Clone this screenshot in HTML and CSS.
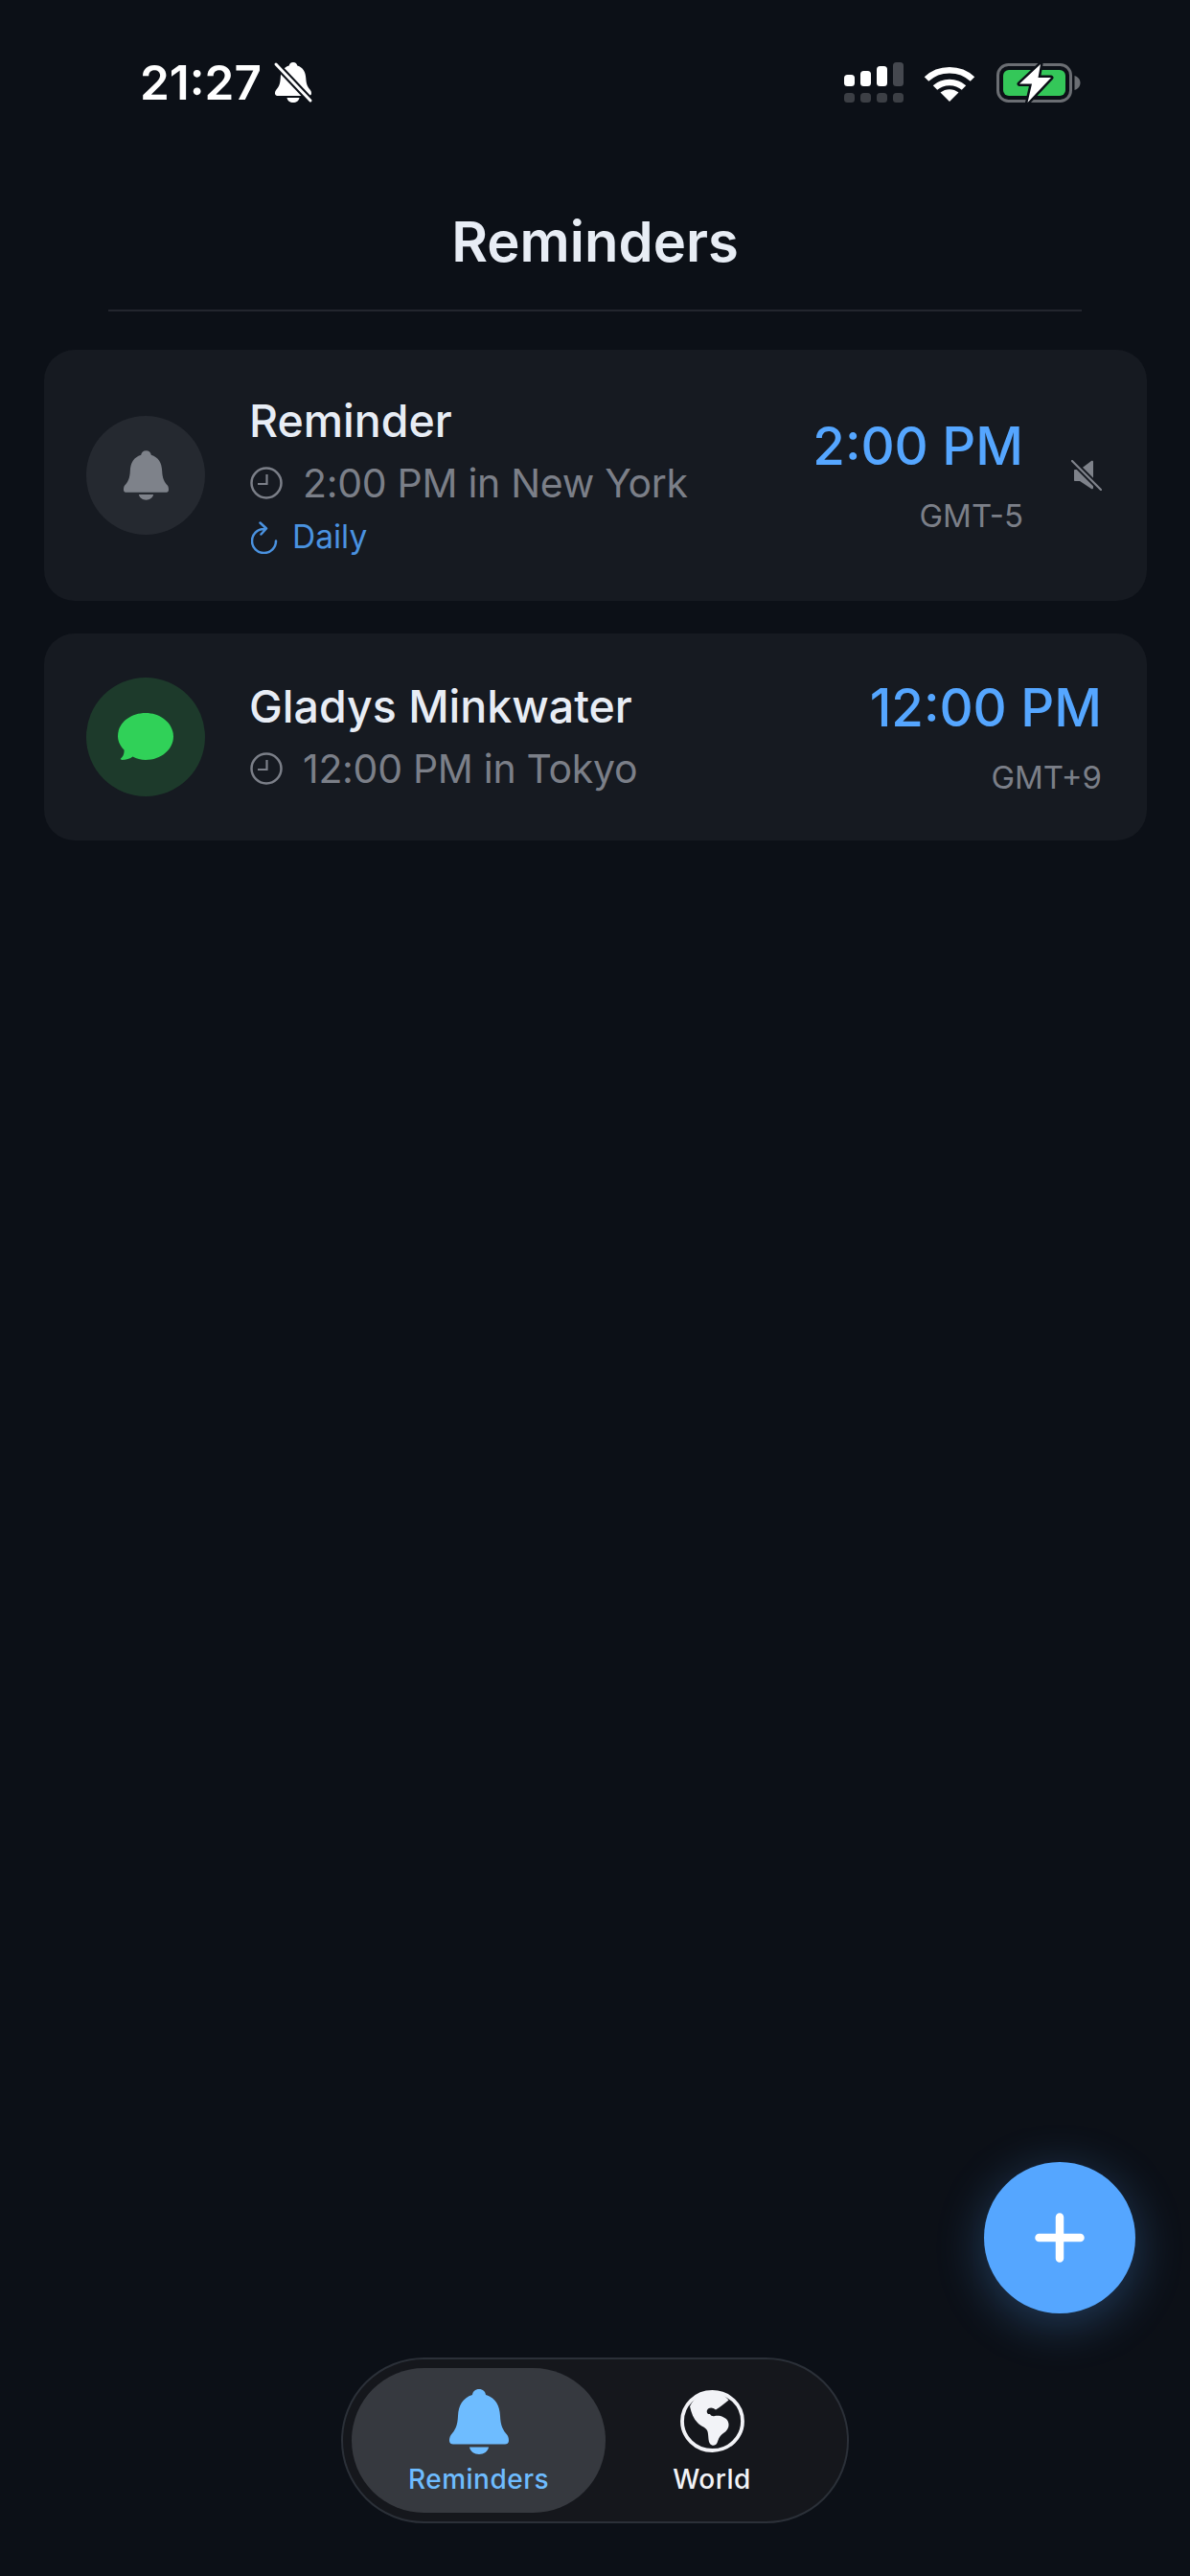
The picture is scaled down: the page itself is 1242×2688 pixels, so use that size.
FILE: index.html
```html
<!DOCTYPE html>
<html lang="en">
  <head>
    <meta charset="UTF-8" />
    <meta name="viewport" content="width=device-width, initial-scale=1.0" />
    <title>Reminders</title>
    <link rel="stylesheet" href="styles.css">
  </head>
  <body>
    <div class="page">
      <div class="status-bar">
        <div class="status-left">
          <span class="status-time">21:27</span>
          <svg class="icon-silent" viewBox="0 0 42 44">
            <g transform="translate(2 1)">
              <path fill="#fff" d="M19 0c-2.500 0-4 1.500-4.300 3.600C8.500 5.500 6 10.500 5.700 17c-.3 6-2 9-4.600 12C0 30.200 0 32 0 32.600 0 34.100 1.200 35 2.500 35h33c1.300 0 2.500-.9 2.500-2.400 0-.6 0-2.400-1.100-3.600-2.600-3-4.300-6-4.600-12-.3-6.500-2.800-11.500-9-13.400C23 1.500 21.500 0 19 0zM12.500 37h13c-.4 3-3.200 5-6.500 5s-6.100-2-6.500-5z" />
            </g>
            <path stroke="#0c1017" stroke-width="7" d="M3 3l36 38" />
            <path stroke="#fff" stroke-width="3" stroke-linecap="round" d="M3 3l36 38" />
          </svg>
        </div>
        <div class="status-right">
          <svg class="icon-signal" viewBox="0 0 62 42">
            <rect x="0" y="13" width="11" height="12" rx="3.500" fill="#fff" />
            <rect x="17" y="9" width="11" height="16" rx="3.500" fill="#fff" />
            <rect x="34" y="4" width="11" height="21" rx="3.500" fill="#fff" />
            <rect x="51" y="0" width="11" height="25" rx="3.500" fill="#45484f" />
            <rect x="0" y="32" width="11" height="10" rx="3.500" fill="#3c3f45" />
            <rect x="17" y="32" width="11" height="10" rx="3.500" fill="#3c3f45" />
            <rect x="34" y="32" width="11" height="10" rx="3.500" fill="#3c3f45" />
            <rect x="51" y="32" width="11" height="10" rx="3.500" fill="#3c3f45" />
          </svg>
          <svg class="icon-wifi" viewBox="0 0 54 39">
            <path fill="none" stroke="#fff" stroke-width="6.500" d="M3 15.500C16 3 38 3 51 15.500" />
            <path fill="none" stroke="#fff" stroke-width="6.500" d="M12 24.500C20 17 34 17 42 24.500" />
            <path fill="#fff" d="M27 39L17.500 29.500C23 25 31 25 36.500 29.500z" />
          </svg>
          <svg class="icon-battery" viewBox="0 -1 88 43">
            <rect x="1.500" y="1.500" width="76" height="38" rx="11" fill="none" stroke="#6b6e73" stroke-width="3" />
            <rect x="7" y="7" width="65" height="27" rx="6" fill="#34c759" />
            <path fill="#6b6e73" d="M81.500 13c3.500 1 6 4 6 7.500s-2.500 6.500-6 7.500z" />
            <path fill="#fff" stroke="#0c1017" stroke-width="5" stroke-linejoin="round" paint-order="stroke" d="M46 1L24 21.500H37L32.500 41L57 15H43.500z" />
          </svg>
        </div>
      </div>

      <header class="page-header">
        <h1>Reminders</h1>
      </header>

      <div class="card-list">
        <div class="card">
          <div class="avatar avatar-muted">
            <svg class="avatar-bell" viewBox="0 0 62 68"><path fill="currentColor" d="M31 0c-4 0-6.500 2.500-7 6C14 9 9.500 17 9 28c-.4 10-3 15-7.500 20C0 50 0 53 0 54c0 2.500 2 3.500 4 3.500h54c2 0 4-1 4-3.500 0-1 0-4-1.500-6C56 43 53.400 38 53 28 52.500 17 48 9 38 6c-.5-3.500-3-6-7-6zM21 60.500h20c-.6 4.500-5 7.500-10 7.500s-9.400-3-10-7.500z" /></svg>
          </div>
          <div class="card-body">
            <div class="card-title">Reminder</div>
            <div class="card-sub">
              <svg class="icon-clock" viewBox="0 0 34 34">
                <circle cx="17" cy="17" r="15.500" fill="none" stroke="currentColor" stroke-width="2.500" />
                <path fill="none" stroke="currentColor" stroke-width="2.200" d="M17.500 8v10H8" />
              </svg>
              <span>2:00 PM in New York</span>
            </div>
            <div class="card-repeat">
              <svg class="icon-repeat" viewBox="0 0 28 34">
                <path fill="none" stroke="currentColor" stroke-width="2.500" stroke-linecap="round" stroke-linejoin="round" d="M26 20.500A12.500 12.500 0 1 1 13.500 8M9.500 1.500L16 7.500 10.500 13.500" />
              </svg>
              <span>Daily</span>
            </div>
          </div>
          <div class="card-time">
            <div class="time-value">2:00 PM</div>
            <div class="time-zone">GMT-5</div>
          </div>
          <svg class="icon-mute" viewBox="0 0 32 32">
            <path fill="#7e828a" d="M3 11c0-.6.4-1 1-1h5L21 1c1-.7 2-.2 2 1v27c0 1.200-1 1.700-2 1L9 22H4c-.6 0-1-.4-1-1z" />
            <path stroke="#161a21" stroke-width="6" d="M1 1l30 30" />
            <path stroke="#7e828a" stroke-width="2.200" stroke-linecap="round" d="M1 1l30 30" />
          </svg>
        </div>

        <div class="card">
          <div class="avatar avatar-green">
            <svg class="avatar-bubble" viewBox="0 0 58 50"><path fill="currentColor" d="M29 0C13 0 0 10.500 0 24c0 5.500 2.500 10.500 6.500 14.500C7 42 5.500 46 3 47.500c-.5.800 0 1.500 1 1.500 4.500 0 9-1.500 11.500-3.500C19.500 47.500 24 49 29 49c16 0 29-11 29-24.500S45 0 29 0z" /></svg>
          </div>
          <div class="card-body">
            <div class="card-title">Gladys Minkwater</div>
            <div class="card-sub">
              <svg class="icon-clock" viewBox="0 0 34 34">
                <circle cx="17" cy="17" r="15.500" fill="none" stroke="currentColor" stroke-width="2.500" />
                <path fill="none" stroke="currentColor" stroke-width="2.200" d="M17.500 8v10H8" />
              </svg>
              <span>12:00 PM in Tokyo</span>
            </div>
          </div>
          <div class="card-time">
            <div class="time-value">12:00 PM</div>
            <div class="time-zone">GMT+9</div>
          </div>
        </div>
      </div>

      <nav class="tab-bar">
        <div class="tab-pill">
          <div class="tab tab-active">
            <svg class="tab-bell" viewBox="0 0 62 68"><path fill="currentColor" d="M31 0c-4 0-6.500 2.500-7 6C14 9 9.500 17 9 28c-.4 10-3 15-7.500 20C0 50 0 53 0 54c0 2.500 2 3.500 4 3.500h54c2 0 4-1 4-3.500 0-1 0-4-1.500-6C56 43 53.400 38 53 28 52.500 17 48 9 38 6c-.5-3.500-3-6-7-6zM21 60.500h20c-.6 4.500-5 7.500-10 7.500s-9.400-3-10-7.500z" /></svg>
            <span>Reminders</span>
          </div>
          <div class="tab">
            <svg class="tab-globe" viewBox="0 0 67 65">
              <ellipse cx="33.500" cy="32.500" rx="31.500" ry="30.500" fill="none" stroke="currentColor" stroke-width="3.800" />
              <path fill="currentColor" d="M10 17C15 6 25 2 33.500 2 40 2 46 5 50.500 10.500 46 14 41 18 37 20.500 34 18 30 17.500 28 21 27 24 29 25.500 31 25 32 27 34 27.500 36 27 41 26 47 28 49.500 32 52 37 50 42 45 45 41 47.500 40 51 38.500 55 37 58.500 33 58.500 31 56 28.500 53 30 46 28 42 26 38.500 21 37.500 18 34 14 30 11.500 24 10 17z" />
            </svg>
            <span>World</span>
          </div>
        </div>
      </nav>

      <button class="fab" type="button">
        <svg viewBox="0 0 52 52"><path stroke="#fff" stroke-width="8.500" stroke-linecap="round" d="M26 4.500v43M4.500 26h43" /></svg>
      </button>
    </div>
  </body>
</html>
```

FILE: styles.css
```css
body {
  margin: 0;
  padding: 0;
  font-family: Inter, "Noto Sans", sans-serif;
  background-color: #0c1017;
  color: #e8edf5;
}
.page {
  position: relative;
  height: 2688px;
  display: flex;
  flex-direction: column;
  overflow: hidden;
}

/* status bar */
.status-bar {
  display: flex;
  justify-content: space-between;
  align-items: center;
  height: 56px;
  padding: 58px 114px 0 146px;
}
.status-left {
  display: flex;
  align-items: center;
  gap: 12px;
}
.status-time {
  font-size: 49.5px;
  font-weight: 600;
  line-height: 56px;
  color: #ffffff;
}
.icon-silent {
  width: 42px;
  height: 44px;
}
.status-right {
  display: flex;
  align-items: center;
}
.icon-signal {
  width: 62px;
  height: 42px;
  margin-right: 21px;
}
.icon-wifi {
  width: 54px;
  height: 39px;
  margin-right: 22px;
}
.icon-battery {
  width: 88px;
  height: 43px;
}

/* header */
.page-header {
  margin: 102px 113px 40px;
  padding-bottom: 35px;
  border-bottom: 2px solid #23262e;
  text-align: center;
}
.page-header h1 {
  margin: 0;
  font-size: 58px;
  font-weight: 600;
  line-height: 72px;
}

/* reminder cards */
.card-list {
  display: flex;
  flex-direction: column;
  gap: 34px;
  padding: 0 45px 0 46px;
}
.card {
  display: flex;
  align-items: center;
  padding: 46px 47px 46px 44px;
  border-radius: 32px;
  background-color: #161a21;
}
.avatar {
  flex: none;
  display: flex;
  align-items: center;
  justify-content: center;
  width: 124px;
  height: 124px;
  margin-right: 46px;
  border-radius: 50%;
}
.avatar-muted {
  background-color: #252930;
  color: #7e828a;
}
.avatar-green {
  background-color: #1d3a2b;
  color: #30d158;
}
.avatar-bell {
  width: 47px;
  height: 52px;
}
.avatar-bubble {
  width: 58px;
  height: 50px;
}
.card-body {
  flex: 1;
  min-width: 0;
}
.card-title {
  font-size: 46.5px;
  font-weight: 550;
  line-height: 56px;
  color: #e8edf5;
}
.card-sub {
  display: flex;
  align-items: center;
  gap: 21px;
  margin-top: 9px;
  font-size: 41px;
  letter-spacing: -0.3px;
  line-height: 56px;
  color: #7b7f88;
}
.icon-clock {
  flex: none;
  width: 34px;
  height: 34px;
  margin-left: 1px;
}
.card-repeat {
  display: flex;
  align-items: center;
  gap: 15px;
  margin-top: 8px;
  font-size: 33.5px;
  line-height: 41px;
  color: #4a92e0;
}
.icon-repeat {
  flex: none;
  width: 28px;
  height: 34px;
  margin-left: 2px;
}
.card-time {
  flex: none;
  text-align: right;
}
.time-value {
  font-size: 54.5px;
  font-weight: 500;
  line-height: 60px;
  color: #55a6ff;
}
.time-zone {
  margin-top: 23px;
  font-size: 33px;
  line-height: 40px;
  color: #7b7f88;
}
.icon-mute {
  flex: none;
  width: 32px;
  height: 32px;
  margin-left: 50px;
}

/* bottom tabs */
.tab-bar {
  display: flex;
  justify-content: center;
  margin-top: auto;
  padding-bottom: 55px;
}
.tab-pill {
  display: flex;
  width: 530px;
  height: 173px;
  padding: 9px;
  box-sizing: border-box;
  border: 2px solid #2b3038;
  border-radius: 87px;
  background-color: #15171c;
}
.tab {
  display: flex;
  flex-direction: column;
  align-items: center;
  width: 222px;
  padding-top: 22px;
  box-sizing: border-box;
  font-size: 28px;
  font-weight: 500;
  letter-spacing: 0.5px;
  line-height: 36px;
  color: #f2f3f7;
}
.tab-active {
  width: 265px;
  border-radius: 76px;
  background-color: #36393f;
  color: #6ebcff;
}
.tab-bell {
  width: 62px;
  height: 68px;
  margin-bottom: 8px;
}
.tab-globe {
  width: 67px;
  height: 65px;
  margin-top: 1px;
  margin-bottom: 10px;
}

/* add button */
.fab {
  position: absolute;
  left: 1027px;
  top: 2256px;
  display: flex;
  align-items: center;
  justify-content: center;
  width: 158px;
  height: 158px;
  padding: 0;
  border: none;
  border-radius: 50%;
  background-color: #55a6ff;
  box-shadow: 0 10px 50px rgba(85, 166, 255, 0.3);
}
.fab svg {
  width: 52px;
  height: 52px;
}
```
